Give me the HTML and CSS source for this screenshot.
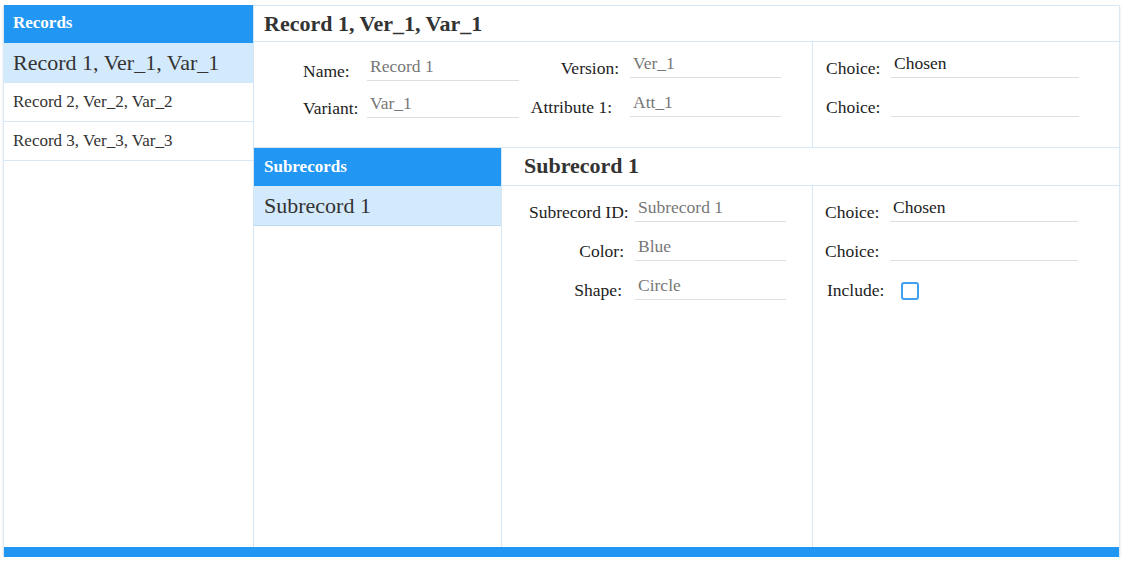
FILE: index.html
```html
<!DOCTYPE html>
<html>
<head>
<meta charset="utf-8">
<title>Records</title>
<link rel="stylesheet" href="styles.css">
</head>
<body>
<div class="app">
  <div class="main">
    <aside class="sidebar">
      <div class="panel-head">Records</div>
      <div class="list-item active">Record 1, Ver_1, Var_1</div>
      <div class="list-item">Record 2, Ver_2, Var_2</div>
      <div class="list-item">Record 3, Ver_3, Var_3</div>
    </aside>
    <section class="record">
      <div class="record-head">Record 1, Ver_1, Var_1</div>
      <div class="record-form">
        <div class="form-main">
          <div class="fcol fcol-a">
            <div class="field"><span class="label label-a">Name:</span><input class="input input-a" value="Record 1" readonly></div>
            <div class="field"><span class="label label-a">Variant:</span><input class="input input-a" value="Var_1" readonly></div>
          </div>
          <div class="fcol fcol-b">
            <div class="field"><span class="label label-b">Version:</span><input class="input input-b" value="Ver_1" readonly></div>
            <div class="field"><span class="label label-b label-b-wide">Attribute 1:</span><input class="input input-b" value="Att_1" readonly></div>
          </div>
        </div>
        <div class="form-side fcol fcol-b">
          <div class="field"><span class="label label-c">Choice:</span><input class="input input-c choice" value="Chosen" readonly></div>
          <div class="field"><span class="label label-c">Choice:</span><input class="input input-c choice" value="" readonly></div>
        </div>
      </div>
      <div class="lower">
        <div class="sub-list">
          <div class="panel-head sub-head-blue">Subrecords</div>
          <div class="sub-item active">Subrecord 1</div>
        </div>
        <div class="sub-detail">
          <div class="sub-head">Subrecord 1</div>
          <div class="sub-form">
            <div class="sub-form-main fcol fcol-b">
              <div class="field"><span class="label label-d">Subrecord ID:</span><input class="input input-b" value="Subrecord 1" readonly></div>
              <div class="field"><span class="label label-d label-d-color">Color:</span><input class="input input-b" value="Blue" readonly></div>
              <div class="field"><span class="label label-d label-d-shape">Shape:</span><input class="input input-b" value="Circle" readonly></div>
            </div>
            <div class="sub-form-side fcol fcol-b">
              <div class="field"><span class="label label-c">Choice:</span><input class="input input-c choice" value="Chosen" readonly></div>
              <div class="field"><span class="label label-c">Choice:</span><input class="input input-c choice" value="" readonly></div>
              <div class="field field-check"><span class="label label-c label-include">Include:</span><span class="checkbox"></span></div>
            </div>
          </div>
        </div>
      </div>
    </section>
  </div>
  <div class="footer-bar"></div>
</div>
</body>
</html>
```

FILE: styles.css
```css
* { box-sizing: border-box; }

body {
  margin: 0;
  background: #fff;
  font-family: "Liberation Serif", "Times New Roman", serif;
  color: #222;
}

.app {
  margin: 5px 0 0 3px;
  width: 1117px;
  border-left: 1px solid #dbe9f6;
  border-right: 1px solid #dbe9f6;
  box-shadow: 0 1px 2px rgba(0, 0, 0, 0.12);
}

.main {
  display: flex;
  height: 542px;
}

.sidebar {
  width: 250px;
  border-right: 1px solid #d3e5f5;
  flex: none;
}

.panel-head {
  background: #2196f3;
  color: #fff;
  font-weight: bold;
  font-size: 17px;
  height: 38px;
  line-height: 35px;
  padding: 0 9px;
}

.list-item {
  padding-left: 9px;
  font-size: 17px;
  line-height: 38px;
  border-bottom: 1px solid #d6e7f6;
  color: #333;
  white-space: nowrap;
}

.list-item.active {
  font-size: 22px;
  line-height: 39px;
  background: #d3e9fc;
  border-bottom-color: #d3e9fc;
}

.record {
  flex: 1;
  display: flex;
  flex-direction: column;
  min-width: 0;
}

.record-head {
  height: 37px;
  border-top: 1px solid #d6e7f6;
  border-bottom: 1px solid #d6e7f6;
  font-size: 22px;
  font-weight: bold;
  line-height: 35px;
  padding-left: 10px;
  color: #333;
}

.record-form {
  display: flex;
  height: 106px;
  border-bottom: 1px solid #d6e7f6;
}

.form-main {
  width: 559px;
  border-right: 1px solid #d6e7f6;
  display: flex;
  padding-left: 49px;
}

.form-side {
  flex: 1;
  padding-left: 13px;
}

.fcol {
  display: flex;
  flex-direction: column;
}

.fcol-a {
  padding-top: 13px;
  gap: 11px;
}

.fcol-b {
  padding-top: 10px;
  gap: 13px;
}

.field {
  display: flex;
  align-items: flex-end;
  min-height: 26px;
}

.label {
  font-size: 17.5px;
  line-height: 20px;
  white-space: nowrap;
  color: #222;
  flex: none;
}

.label-a { width: 64px; }

.label-b {
  width: 111px;
  text-align: right;
  padding-right: 11px;
}

.label-b-wide { padding-right: 18px; }

.label-c { width: 65px; }

.label-include { padding-left: 2px; }

.label-d {
  width: 106px;
  text-align: right;
  padding-right: 7px;
}

.label-d-color { padding-right: 11px; }

.label-d-shape { padding-right: 13px; }

.input {
  display: block;
  height: 26px;
  border: 0;
  border-bottom: 1px solid #dedede;
  padding: 0 3px 2px;
  margin: 0;
  font-family: inherit;
  font-size: 17.5px;
  color: #777;
  background: transparent;
  outline: none;
  flex: none;
}

.input-a { width: 152px; }
.input-b { width: 151px; }
.input-c { width: 188px; }

.choice { color: #222; }

.lower {
  flex: 1;
  display: flex;
}

.sub-list {
  width: 248px;
  border-right: 1px solid #d6e7f6;
  flex: none;
}

.sub-head-blue {
  padding-left: 10px;
  line-height: 37px;
}

.sub-item {
  padding-left: 10px;
  font-size: 22px;
  line-height: 39px;
  color: #333;
  border-bottom: 1px solid #bcdaf3;
}

.sub-item.active { background: #d3e9fc; }

.sub-detail {
  flex: 1;
  display: flex;
  flex-direction: column;
}

.sub-head {
  height: 38px;
  border-bottom: 1px solid #d6e7f6;
  font-size: 22px;
  font-weight: bold;
  line-height: 36px;
  padding-left: 22px;
  color: #333;
}

.sub-form {
  flex: 1;
  display: flex;
}

.sub-form-main {
  width: 311px;
  border-right: 1px solid #d6e7f6;
  padding-left: 27px;
}

.sub-form-side {
  flex: 1;
  padding-left: 12px;
}

.checkbox {
  display: block;
  width: 18px;
  height: 18px;
  margin-left: 11px;
  border: 2px solid #42a0f0;
  border-radius: 3px;
  background: #fff;
  flex: none;
}

.footer-bar {
  height: 10px;
  background: #2196f3;
}
```
